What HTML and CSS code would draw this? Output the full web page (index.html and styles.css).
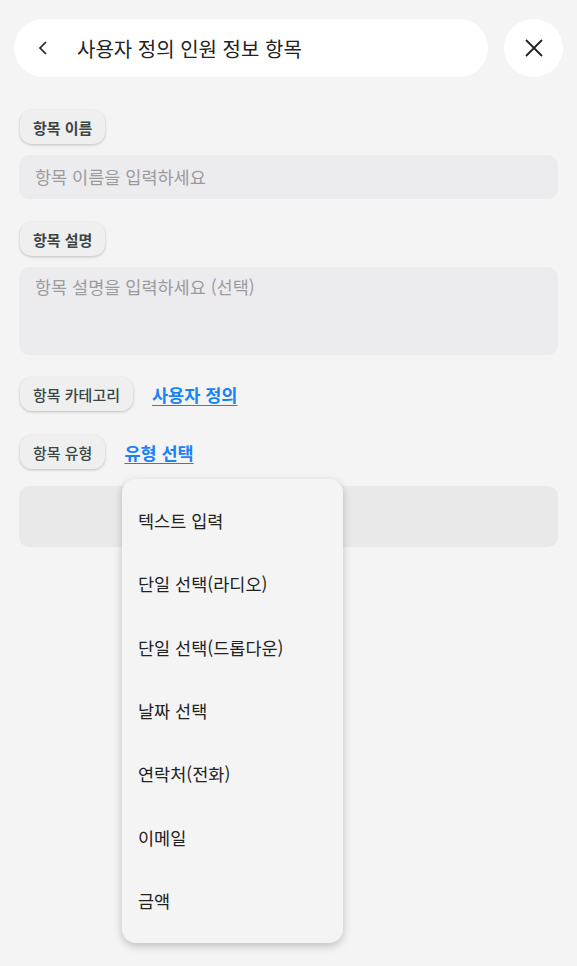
FILE: index.html
```html
<!DOCTYPE html>
<html lang="ko">
<head>
    <meta charset="UTF-8">
    <meta name="viewport" content="width=device-width, initial-scale=1.0">
    <title>사용자 정의 인원 정보 항목</title>
    <link rel="stylesheet" href="styles.css">
</head>
<body>
    <div class="page">
        <div class="header">
            <div class="title-bar">
                <svg class="back" width="12" height="14" viewBox="0 0 12 14"><path d="M9 1 L3 7 L9 13" fill="none" stroke="#222" stroke-width="1.7"/></svg>
                <span class="title">사용자 정의 인원 정보 항목</span>
            </div>
            <div class="close-btn">
                <svg width="20" height="20" viewBox="0 0 20 20"><path d="M2 2 L18 18 M18 2 L2 18" fill="none" stroke="#222" stroke-width="1.8"/></svg>
            </div>
        </div>

        <div class="form">
            <div class="chip bold">항목 이름</div>
            <input class="field" type="text" placeholder="항목 이름을 입력하세요">

            <div class="chip bold chip-gap">항목 설명</div>
            <textarea class="field area" placeholder="항목 설명을 입력하세요 (선택)"></textarea>

            <div class="row row-cat">
                <div class="chip">항목 카테고리</div>
                <a class="link" href="#">사용자 정의</a>
            </div>

            <div class="row row-type">
                <div class="chip">항목 유형</div>
                <a class="link" href="#">유형 선택</a>
            </div>

            <div class="options-box"></div>

            <ul class="menu">
                <li>텍스트 입력</li>
                <li>단일 선택(라디오)</li>
                <li>단일 선택(드롭다운)</li>
                <li>날짜 선택</li>
                <li>연락처(전화)</li>
                <li>이메일</li>
                <li>금액</li>
            </ul>
        </div>
    </div>
</body>
</html>
```

FILE: styles.css
```css
html, body {
    margin: 0;
    background: #f4f4f4;
}
body {
    font-family: "Noto Sans CJK KR", "Noto Sans", sans-serif;
    color: #222;
}
.page {
    min-height: 966px;
}
.header {
    display: flex;
    gap: 16px;
    padding: 19px 14px 0 14px;
}
.title-bar {
    width: 474px;
    height: 58px;
    background: #fff;
    border-radius: 29px;
    display: flex;
    align-items: center;
    box-sizing: border-box;
    padding-left: 23px;
}
.back {
    margin-right: 28px;
}
.title {
    font-size: 20px;
    color: #222;
}
.close-btn {
    width: 59px;
    height: 58px;
    border-radius: 50%;
    background: #fff;
    display: flex;
    align-items: center;
    justify-content: center;
}
.form {
    position: relative;
    min-height: 870px;
    padding: 33px 19px 0 19px;
}
.chip {
    display: inline-flex;
    align-items: center;
    height: 34px;
    padding: 0 13px;
    margin-left: 1px;
    background: #efefef;
    border-radius: 12px;
    box-shadow: 0 1px 3px rgba(0, 0, 0, 0.22);
    font-size: 15px;
    font-weight: 500;
    color: #3a4646;
    box-sizing: border-box;
}
.chip.bold {
    font-weight: 700;
}
.chip-gap {
    margin-top: 23px;
}
.field {
    display: block;
    width: 100%;
    box-sizing: border-box;
    margin-top: 11px;
    height: 44px;
    border: none;
    outline: none;
    border-radius: 10px;
    background: #ececee;
    padding: 0 16px 2px 16px;
    font-family: inherit;
    font-size: 17.5px;
    color: #222;
}
.field::placeholder {
    color: #9b9b9e;
}
.area {
    margin-top: 11px;
    height: 88px;
    padding: 7px 16px;
    resize: none;
}
.row {
    display: flex;
    align-items: center;
    gap: 19px;
}
.row-cat {
    margin-top: 22px;
}
.row-type {
    margin-top: 24px;
}
.link {
    color: #1a82f7;
    font-size: 17.5px;
    font-weight: 700;
    text-decoration: underline;
    text-underline-offset: 3px;
}
.options-box {
    margin-top: 17px;
    height: 61px;
    border-radius: 10px;
    background: #e9e9e9;
}
.menu {
    position: absolute;
    left: 122px;
    top: 402px;
    width: 221px;
    margin: 0;
    padding: 10px 0 11px 0;
    list-style: none;
    background: #f4f4f4;
    border-radius: 14px;
    box-shadow: 0 3px 8px rgba(0, 0, 0, 0.22);
}
.menu li {
    height: 63.3px;
    display: flex;
    align-items: center;
    padding-left: 16px;
    font-size: 17.5px;
    color: #222;
}
```
